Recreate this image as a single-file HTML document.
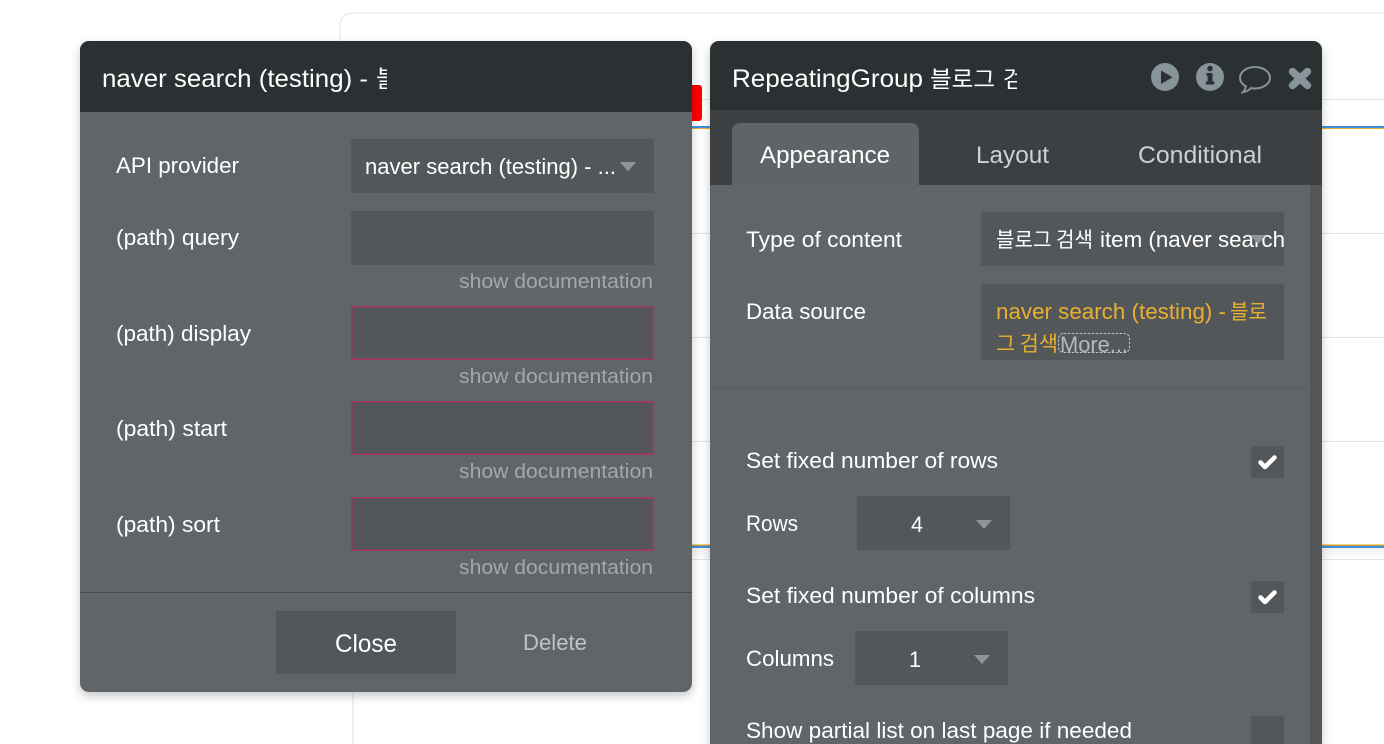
<!DOCTYPE html>
<html><head><meta charset="utf-8">
<style>
html,body{margin:0;padding:0;background:#fff;width:1384px;height:744px;overflow:hidden}
svg{display:block}
text{font-family:"Liberation Sans","Noto Sans CJK KR",sans-serif;font-size:22px;fill:#fff}
.d{font-size:20px;fill:#a3a8aa}
.k{font-family:"Noto Sans CJK KR",sans-serif}
.g{fill:#e9b02f}
.a{fill:#8f9496}
</style></head><body>
<svg width="1384" height="744" viewBox="0 0 1384 744" xmlns="http://www.w3.org/2000/svg">
<defs>
<clipPath id="c1"><rect x="90" y="50" width="297" height="60"/></clipPath>
<clipPath id="c2"><rect x="725" y="50" width="292" height="60"/></clipPath>
<clipPath id="c3"><rect x="981" y="212" width="303" height="54"/></clipPath>
<linearGradient id="fade" x1="0" y1="0" x2="0" y2="1"><stop offset="0" stop-color="#f1f1f1"/><stop offset="1" stop-color="#fff"/></linearGradient>
<filter id="s" x="-10%" y="-10%" width="120%" height="120%"><feDropShadow dx="0" dy="4" stdDeviation="5" flood-color="#000" flood-opacity=".22"/></filter>
</defs>
<!-- background canvas -->
<path d="M340 60V25a12 12 0 0 1 12-12H1384" fill="none" stroke="#e4e4e4" stroke-width="1"/>
<rect x="352" y="680" width="2" height="64" fill="#eee"/>
<g fill="#e3e3e3">
<rect x="692" y="99" width="692" height="1"/>
<rect x="692" y="233" width="692" height="1"/>
<rect x="692" y="337" width="692" height="1"/>
<rect x="692" y="441" width="692" height="1"/>
<rect x="692" y="559" width="692" height="1"/>
</g>
<rect x="692" y="126" width="692" height="2" fill="#3f8fdc"/>
<rect x="692" y="128" width="692" height="1" fill="#e9b02f"/>
<rect x="692" y="548" width="692" height="11" fill="url(#fade)"/>
<rect x="692" y="544" width="692" height="1" fill="#f0d583"/>
<rect x="692" y="545" width="692" height="1" fill="#c79a3c"/>
<rect x="692" y="546" width="692" height="2" fill="#3f8fdc"/>
<rect x="680" y="85" width="22" height="36" rx="3" fill="#f00"/>

<!-- left panel -->
<g filter="url(#s)">
<rect x="80" y="41" width="612" height="651" rx="9" fill="#5f6567"/>
</g>
<path d="M80 112V50a9 9 0 0 1 9-9H683a9 9 0 0 1 9 9V112Z" fill="#2b3133"/>
<g clip-path="url(#c1)">
<text x="102" y="87" style="font-size:25px" textLength="266" lengthAdjust="spacingAndGlyphs">naver search (testing) -</text>
<text x="376" y="87" class="k" style="font-size:24px">블</text>
</g>
<g fill="#53575a">
<rect x="351" y="139" width="303" height="54" rx="1"/>
<rect x="351" y="211" width="303" height="54" rx="1"/>
</g>
<g fill="#53575a" stroke="#a8345c" stroke-width="1.5">
<rect x="351.75" y="306.75" width="301.5" height="52.5"/>
<rect x="351.75" y="401.75" width="301.5" height="52.5"/>
<rect x="351.75" y="497.75" width="301.5" height="52.5"/>
</g>
<text x="116" y="173" textLength="123" lengthAdjust="spacingAndGlyphs">API provider</text>
<text x="365" y="174" textLength="251" lengthAdjust="spacingAndGlyphs">naver search (testing) - ...</text>
<path d="M620 162h16l-8 9.500z" class="a"/>
<text x="116" y="245" textLength="123" lengthAdjust="spacingAndGlyphs">(path) query</text>
<text x="116" y="341" textLength="135" lengthAdjust="spacingAndGlyphs">(path) display</text>
<text x="116" y="436" textLength="111" lengthAdjust="spacingAndGlyphs">(path) start</text>
<text x="116" y="532" textLength="104" lengthAdjust="spacingAndGlyphs">(path) sort</text>
<text x="459" y="288" class="d" textLength="194" lengthAdjust="spacingAndGlyphs">show documentation</text>
<text x="459" y="383" class="d" textLength="194" lengthAdjust="spacingAndGlyphs">show documentation</text>
<text x="459" y="478" class="d" textLength="194" lengthAdjust="spacingAndGlyphs">show documentation</text>
<text x="459" y="574" class="d" textLength="194" lengthAdjust="spacingAndGlyphs">show documentation</text>
<rect x="80" y="592" width="612" height="1" fill="#484c4e"/>
<rect x="276" y="611" width="180" height="63" fill="#53575a"/>
<text x="335" y="652" style="font-size:25px" textLength="62" lengthAdjust="spacingAndGlyphs">Close</text>
<text x="523" y="650" style="font-size:22px;fill:#c0c3c4" textLength="64" lengthAdjust="spacingAndGlyphs">Delete</text>

<!-- right panel -->
<g filter="url(#s)">
<path d="M710 744V50a9 9 0 0 1 9-9H1313a9 9 0 0 1 9 9V744Z" fill="#5f6567"/>
</g>
<path d="M710 110V50a9 9 0 0 1 9-9H1313a9 9 0 0 1 9 9V110Z" fill="#2b3133"/>
<rect x="710" y="110" width="612" height="75" fill="#3c4043"/>
<path d="M732 185V131a8 8 0 0 1 8-8H911a8 8 0 0 1 8 8V185Z" fill="#5f6567"/>
<rect x="1310" y="185" width="12" height="559" fill="#53575a"/>
<g clip-path="url(#c2)">
<text x="732" y="87" style="font-size:25px" textLength="191" lengthAdjust="spacingAndGlyphs">RepeatingGroup</text>
<text x="930" y="87" class="k" style="font-size:23px" textLength="65" lengthAdjust="spacingAndGlyphs">블로그</text>
<text x="1003" y="87" class="k" style="font-size:23px">검</text>
</g>
<!-- header icons -->
<circle cx="1165" cy="77" r="14" fill="#87949a"/>
<path d="M1161 70.500v13.500l11.500-6.800z" fill="#2b3133"/>
<circle cx="1210" cy="77" r="14" fill="#87949a"/>
<path d="M1206.500 73h6v8.500h1.800v3h-8.500v-3h1.800v-5.500h-1.100z" fill="#2b3133"/>
<circle cx="1210" cy="68.500" r="2.800" fill="#2b3133"/>
<path d="M1255 67c-8.300 0-15 4.800-15 10.700 0 3.500 2.300 6.500 5.800 8.500-.4 2.200-1.300 4.500-2.800 6 3-.4 6.300-2.300 8-4.100 1.300.2 2.600.4 4 .4 8.300 0 15-4.900 15-10.800S1263.300 67 1255 67z" fill="none" stroke="#87949a" stroke-width="2"/>
<path d="M1292.500 71.500L1307.500 85.500M1307.500 71.500L1292.500 85.500" stroke="#87949a" stroke-width="7.500" stroke-linecap="round" fill="none"/>
<!-- tabs -->
<text x="760" y="163" style="font-size:24px" textLength="130" lengthAdjust="spacingAndGlyphs">Appearance</text>
<text x="976" y="163" style="font-size:24px;fill:#ced1d2" textLength="73" lengthAdjust="spacingAndGlyphs">Layout</text>
<text x="1138" y="163" style="font-size:24px;fill:#ced1d2" textLength="124" lengthAdjust="spacingAndGlyphs">Conditional</text>
<!-- content -->
<rect x="981" y="212" width="303" height="54" rx="1" fill="#53575a"/>
<rect x="981" y="284" width="303" height="76" fill="#53575a"/>
<text x="746" y="247" textLength="156" lengthAdjust="spacingAndGlyphs">Type of content</text>
<g clip-path="url(#c3)">
<text x="996" y="247" class="k" style="font-size:21px" textLength="97" lengthAdjust="spacingAndGlyphs">블로그 검색</text>
<text x="1100" y="247" textLength="185" lengthAdjust="spacingAndGlyphs">item (naver search</text>
</g>
<path d="M1250 235h16l-8 9z" class="a"/>
<text x="746" y="319" textLength="120" lengthAdjust="spacingAndGlyphs">Data source</text>
<text x="996" y="319" class="g" textLength="230" lengthAdjust="spacingAndGlyphs">naver search (testing) -</text>
<text x="1230" y="319" class="k g" style="font-size:21px" textLength="37" lengthAdjust="spacingAndGlyphs">블로</text>
<text x="996" y="351" class="k g" style="font-size:21px" textLength="62" lengthAdjust="spacingAndGlyphs">그 검색</text>
<rect x="1058.500" y="333.500" width="71" height="19" rx="5" fill="none" stroke="#c4c7c8" stroke-width="1" stroke-dasharray="2.500 1.500"/>
<text x="1060" y="352" style="fill:#b4b9bb" textLength="68" lengthAdjust="spacingAndGlyphs">More...</text>
<rect x="710" y="387" width="600" height="1" fill="#585c5e"/>

<text x="746" y="468" textLength="252" lengthAdjust="spacingAndGlyphs">Set fixed number of rows</text>
<rect x="1251" y="446" width="33" height="32" rx="1" fill="#53575a"/>
<path d="M1260.500 462.500l4.500 4.500 9.500-9.500" fill="none" stroke="#fff" stroke-width="4.500" stroke-linecap="round" stroke-linejoin="round"/>
<text x="746" y="531" textLength="52" lengthAdjust="spacingAndGlyphs">Rows</text>
<rect x="857" y="496" width="153" height="54" rx="1" fill="#53575a"/>
<text x="911" y="532" textLength="12" lengthAdjust="spacingAndGlyphs">4</text>
<path d="M976 520h16l-8 9z" class="a"/>
<text x="746" y="603" textLength="289" lengthAdjust="spacingAndGlyphs">Set fixed number of columns</text>
<rect x="1251" y="581" width="33" height="32" rx="1" fill="#53575a"/>
<path d="M1260.500 597.500l4.500 4.500 9.500-9.500" fill="none" stroke="#fff" stroke-width="4.500" stroke-linecap="round" stroke-linejoin="round"/>
<text x="746" y="666" textLength="88" lengthAdjust="spacingAndGlyphs">Columns</text>
<rect x="855" y="631" width="153" height="54" rx="1" fill="#53575a"/>
<text x="909" y="667" textLength="12" lengthAdjust="spacingAndGlyphs">1</text>
<path d="M974 655h16l-8 9z" class="a"/>
<text x="746" y="738" textLength="386" lengthAdjust="spacingAndGlyphs">Show partial list on last page if needed</text>
<rect x="1251" y="716" width="33" height="28" rx="1" fill="#53575a"/>
</svg>
</body></html>
